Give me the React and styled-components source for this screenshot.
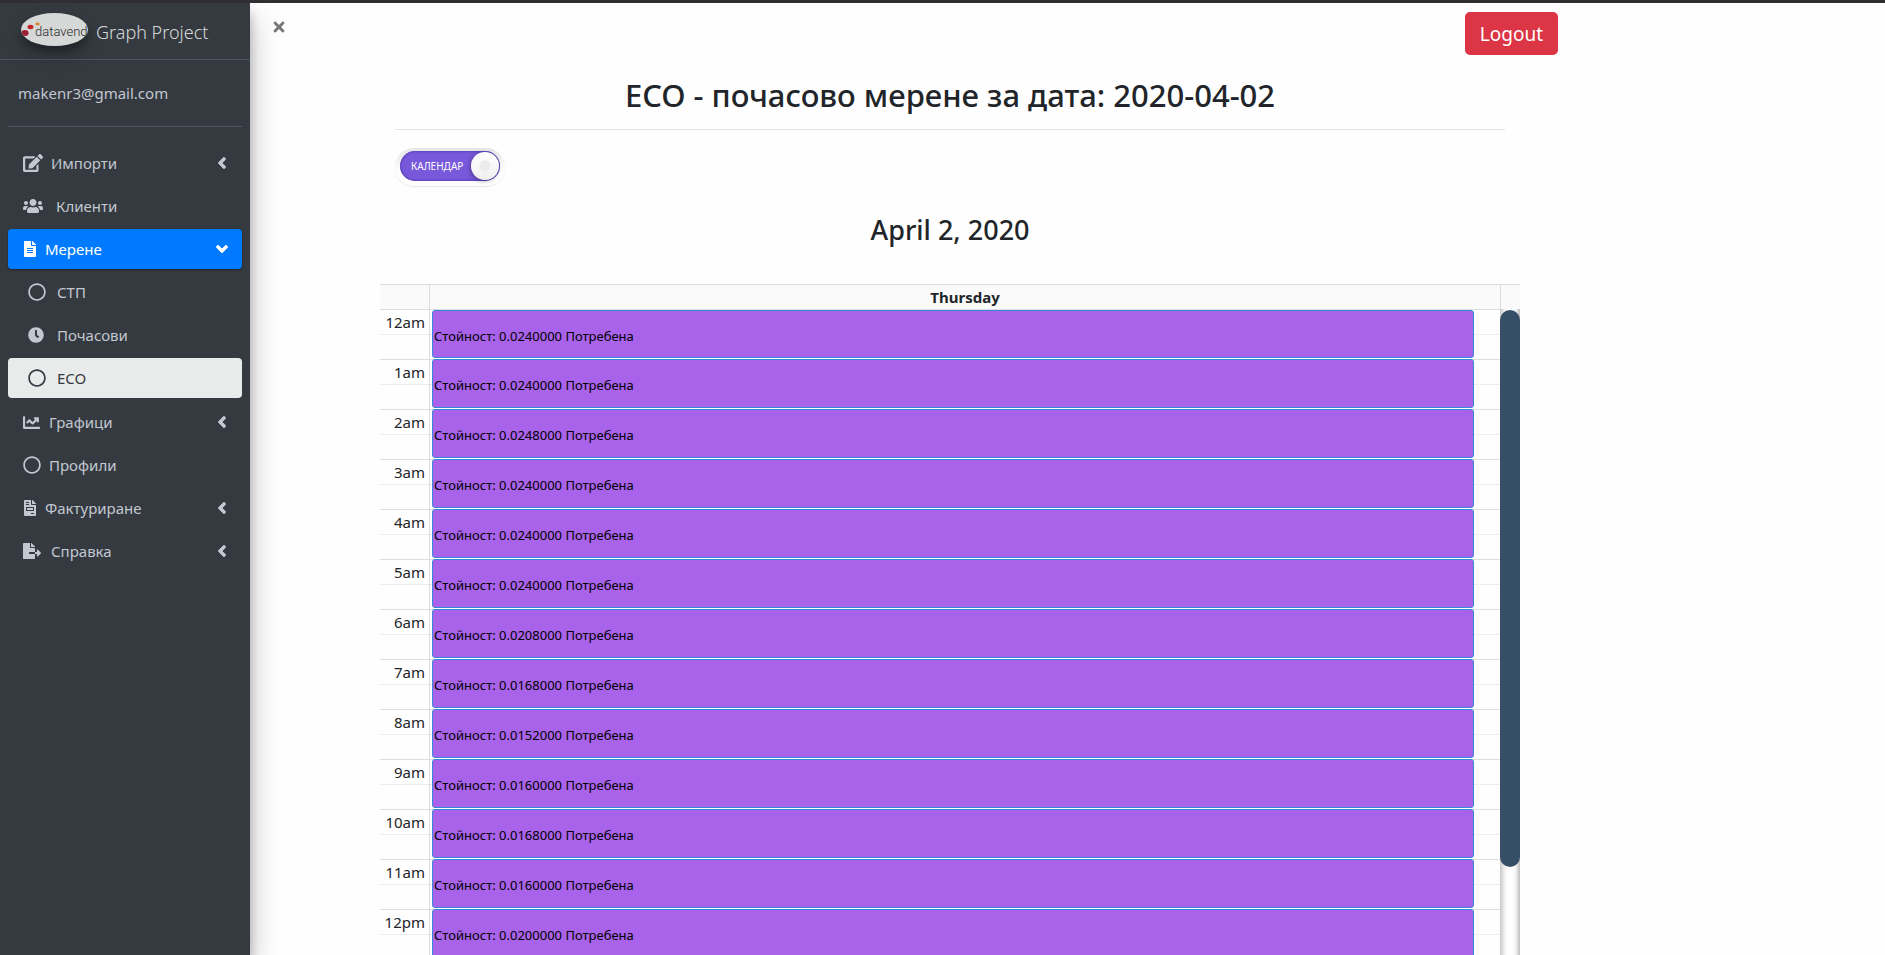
import React, { useState } from "react";
import styled, { createGlobalStyle, css } from "styled-components";
import {
  FaEdit,
  FaUsers,
  FaFileAlt,
  FaRegCircle,
  FaClock,
  FaChartLine,
  FaFileInvoice,
  FaFileExport,
  FaAngleLeft,
  FaAngleDown,
  FaTimes,
} from "react-icons/fa";

const GlobalStyle = createGlobalStyle`
  *, *::before, *::after { box-sizing: border-box; }
  body {
    margin: 0;
    background: #fefefe;
    color: #212529;
    font-family: "Noto Sans", "Open Sans", sans-serif;
    font-size: 15px;
    line-height: 24px;
  }
`;

const Page = styled.div`
  display: flex;
  height: 100vh;
  overflow: hidden;
  border-top: 3px solid #2e2e33;
`;

const Sidebar = styled.aside`
  flex: none;
  width: 250px;
  background: #343a40;
  color: #c2c7d0;
  box-shadow: 0 14px 28px rgba(0, 0, 0, 0.25), 0 10px 10px rgba(0, 0, 0, 0.22);
  z-index: 1;
`;

const Brand = styled.a`
  display: flex;
  align-items: center;
  gap: 8px;
  height: 57px;
  padding: 2px 21px 0;
  border-bottom: 1px solid #4b545c;
  color: rgba(255, 255, 255, 0.8);
  font-size: 18px;
  font-weight: 300;
  text-decoration: none;
  white-space: nowrap;
`;

const LogoMark = styled.svg`
  flex: none;
  width: 67px;
  height: 33px;
  margin-bottom: 5px;
  border-radius: 50%;
  box-shadow: 0 10px 20px rgba(0, 0, 0, 0.19), 0 6px 6px rgba(0, 0, 0, 0.23);
`;

const UserPanel = styled.div`
  display: flex;
  align-items: center;
  height: 67px;
  margin: 0 8px 16px;
  padding: 0 10px;
  border-bottom: 1px solid #4f5962;
`;

const UserLink = styled.a`
  color: #c2c7d0;
  text-decoration: none;
`;

const NavList = styled.ul`
  display: flex;
  flex-direction: column;
  gap: 3px;
  margin: 0;
  padding: ${(p) => (p.$nested ? "3px 0 1px" : "0 8px")};
  list-style: none;
`;

const NavLink = styled.a`
  display: flex;
  align-items: center;
  gap: ${(p) => p.$gap || 8}px;
  height: 40px;
  padding: 0 11px 0 ${(p) => (p.$nested ? 20 : 15)}px;
  border-radius: 4px;
  color: #c2c7d0;
  text-decoration: none;

  ${(p) =>
    p.$state === "open" &&
    css`
      background: #007bff;
      color: #fff;
      box-shadow: 0 1px 3px rgba(0, 0, 0, 0.12), 0 1px 2px rgba(0, 0, 0, 0.24);
    `}
  ${(p) =>
    p.$state === "current" &&
    css`
      background: #e9eaea;
      color: #343a40;
    `}
`;

const IconSlot = styled.span`
  display: flex;
  flex: none;
  width: ${(p) => p.$width}px;
`;

const Label = styled.span`
  flex: 1;
`;

const Main = styled.main`
  flex: 1;
  min-width: 0;
  overflow: hidden;
`;

const TopBar = styled.header`
  display: flex;
  justify-content: space-between;
  align-items: flex-start;
  width: 80%;
  padding: 9px 0 0 21px;
`;

const CloseButton = styled.button`
  display: flex;
  margin-top: 7px;
  padding: 0;
  border: 0;
  background: none;
  color: #777;
  cursor: pointer;
`;

const LogoutButton = styled.button`
  height: 43px;
  padding: 1px 15px 0;
  border: 0;
  border-radius: 5px;
  background: #dc3545;
  color: #fff;
  font: inherit;
  font-size: 19px;
  cursor: pointer;
`;

const Content = styled.div`
  max-width: 1140px;
  margin-left: 130px;
`;

const PageTitle = styled.h2`
  margin: 0 15px;
  padding: 19px 0 12px;
  border-bottom: 1px solid #e3e3e4;
  font-size: 31px;
  font-weight: 500;
  line-height: 43px;
  text-align: center;
`;

const SwitchLabel = styled.label`
  display: flex;
  width: 110px;
  margin: 18px 15px 0;
  padding: 3px 5px 5px;
  border-radius: 19px;
  background: linear-gradient(#e6e6e6, #fefefe 60%);
  box-shadow: 0 1px 1px #e6e6e6;
  cursor: pointer;
`;

const SwitchInput = styled.input`
  position: absolute;
  opacity: 0;
`;

const SwitchTrack = styled.span`
  display: flex;
  flex: 1;
  align-items: center;
  justify-content: space-between;
  flex-direction: ${(p) => (p.$on ? "row" : "row-reverse")};
  height: 30px;
  padding: 0 1px 0 11px;
  border-radius: 15px;
  background: #7859db;
  box-shadow: inset 0 0 3px #3d2696;
  color: #fff;
  font-size: 10px;
  line-height: 12px;
`;

const SwitchKnob = styled.span`
  width: 28px;
  height: 28px;
  border-radius: 50%;
  background: radial-gradient(circle, #ececec 0 5px, transparent 6px),
    linear-gradient(#fff, #f0f0f0);
  box-shadow: -1px 1px 4px rgba(0, 0, 0, 0.35);
`;

const DateTitle = styled.h2`
  margin: 26px 0 37px;
  font-size: 27px;
  font-weight: 500;
  line-height: 35px;
  text-align: center;
`;

const Timetable = styled.table`
  width: 100%;
  border-spacing: 0;
  table-layout: fixed;
`;

const TimeCol = styled.col`
  width: 49px;
`;

const ScrollCol = styled.col`
  width: 20px;
`;

const HeadCell = styled.th`
  height: 25px;
  padding: 0;
  border-top: 1px solid #ddd;
  border-left: ${(p) => (p.$divided ? "1px solid #ddd" : "0")};
  background: #fafafa;
  font-size: 15px;
  font-weight: 700;
  line-height: 24px;
`;

const slotLines = css`
  background-image: linear-gradient(#ddd, #ddd),
    linear-gradient(90deg, #ddd 50%, transparent 50%);
  background-position: 0 0, 0 25px;
  background-size: 100% 1px, 2px 1px;
  background-repeat: repeat-x;
`;

const HourCell = styled.th`
  ${slotLines}
  height: 50px;
  padding: 1px 4px 0 0;
  font-weight: 400;
  text-align: right;
  vertical-align: top;
`;

const SlotCell = styled.td`
  ${slotLines}
  height: 50px;
  padding: ${(p) => (p.$first ? 1 : 0)}px 26px 1px 2px;
  border-left: 1px solid #ddd;
  vertical-align: top;
`;

const EventLink = styled.a`
  display: block;
  height: ${(p) => (p.$first ? 48 : 49)}px;
  padding: 15px 1px 0;
  border: 1px solid #3788d8;
  border-radius: 3px;
  background: #a962ea;
  color: #000;
  font-size: 13px;
  line-height: 20px;
  text-decoration: none;
`;

const ScrollTrack = styled.td`
  padding: 1px 0 0;
  border-top: 0;
  background: linear-gradient(90deg, #c8c8c8, #f4f4f4 25%, #fefefe 40% 65%, #f0f0f0 80%, #bdbdbd);
  vertical-align: top;
`;

const ScrollThumb = styled.div`
  height: 557px;
  border-radius: 10px;
  background: #374e69;
`;

const MENU = [
  { label: "Импорти", icon: FaEdit, size: 20, width: 20, expandable: true },
  { label: "Клиенти", icon: FaUsers, size: 20, width: 20, gap: 13 },
  {
    label: "Мерене",
    icon: FaFileAlt,
    size: 16,
    width: 14,
    state: "open",
    expandable: true,
    children: [
      { label: "СТП", icon: FaRegCircle, size: 18, width: 18, gap: 11 },
      { label: "Почасови", icon: FaClock, size: 16, width: 18, gap: 11 },
      { label: "ECO", icon: FaRegCircle, size: 18, width: 18, gap: 11, state: "current" },
    ],
  },
  { label: "Графици", icon: FaChartLine, size: 17, width: 18, expandable: true },
  { label: "Профили", icon: FaRegCircle, size: 18, width: 18 },
  { label: "Фактуриране", icon: FaFileInvoice, size: 16, width: 14, expandable: true },
  { label: "Справка", icon: FaFileExport, size: 18, width: 20, expandable: true },
];

const HOURS = [
  ["12am", "0.0240000"],
  ["1am", "0.0240000"],
  ["2am", "0.0248000"],
  ["3am", "0.0240000"],
  ["4am", "0.0240000"],
  ["5am", "0.0240000"],
  ["6am", "0.0208000"],
  ["7am", "0.0168000"],
  ["8am", "0.0152000"],
  ["9am", "0.0160000"],
  ["10am", "0.0168000"],
  ["11am", "0.0160000"],
  ["12pm", "0.0200000"],
];

function Logo() {
  return (
    <LogoMark viewBox="0 0 67 33" aria-hidden="true">
      <rect width="67" height="33" fill="#d6d8d7" />
      <ellipse cx="4" cy="20" rx="3.6" ry="3" fill="#9b2335" />
      <ellipse cx="9.5" cy="14" rx="3" ry="2.2" fill="#c8242b" />
      <ellipse cx="16.5" cy="11" rx="2.2" ry="1.4" fill="#d5832f" />
      <text x="14" y="23" fontFamily="Roboto, sans-serif" fontSize="13" fill="#26282a">
        datavend
      </text>
    </LogoMark>
  );
}

function NavItem({ item, nested }) {
  const Icon = item.icon;
  return (
    <li>
      <NavLink href="#" $gap={item.gap} $nested={nested} $state={item.state}>
        <IconSlot $width={item.width}>
          <Icon size={item.size} />
        </IconSlot>
        <Label>{item.label}</Label>
        {item.expandable &&
          (item.state === "open" ? (
            <FaAngleDown size={18} stroke="currentColor" strokeWidth="24" />
          ) : (
            <FaAngleLeft size={18} stroke="currentColor" strokeWidth="24" />
          ))}
      </NavLink>
      {item.children && (
        <NavList $nested>
          {item.children.map((child) => (
            <NavItem key={child.label} item={child} nested />
          ))}
        </NavList>
      )}
    </li>
  );
}

export default function App() {
  const [calendarOn, setCalendarOn] = useState(true);
  return (
    <>
      <GlobalStyle />
      <Page>
        <Sidebar>
          <Brand href="#">
            <Logo />
            Graph Project
          </Brand>
          <UserPanel>
            <UserLink href="#">makenr3@gmail.com</UserLink>
          </UserPanel>
          <nav>
            <NavList>
              {MENU.map((item) => (
                <NavItem key={item.label} item={item} />
              ))}
            </NavList>
          </nav>
        </Sidebar>
        <Main>
          <TopBar>
            <CloseButton type="button" aria-label="Close menu">
              <FaTimes size={16} />
            </CloseButton>
            <LogoutButton type="button">Logout</LogoutButton>
          </TopBar>
          <Content>
            <PageTitle>ECO - почасово мерене за дата: 2020-04-02</PageTitle>
            <SwitchLabel>
              <SwitchInput
                type="checkbox"
                checked={calendarOn}
                onChange={(e) => setCalendarOn(e.target.checked)}
              />
              <SwitchTrack $on={calendarOn}>
                КАЛЕНДАР
                <SwitchKnob />
              </SwitchTrack>
            </SwitchLabel>
            <DateTitle>April 2, 2020</DateTitle>
            <Timetable>
              <colgroup>
                <TimeCol />
                <col />
                <ScrollCol />
              </colgroup>
              <thead>
                <tr>
                  <HeadCell />
                  <HeadCell $divided>Thursday</HeadCell>
                  <HeadCell $divided />
                </tr>
              </thead>
              <tbody>
                {HOURS.map(([hour, value], i) => (
                  <tr key={hour}>
                    <HourCell scope="row">{hour}</HourCell>
                    <SlotCell $first={i === 0}>
                      <EventLink href="#" $first={i === 0}>
                        Стойност: {value} Потребена
                      </EventLink>
                    </SlotCell>
                    {i === 0 && (
                      <ScrollTrack rowSpan={HOURS.length}>
                        <ScrollThumb />
                      </ScrollTrack>
                    )}
                  </tr>
                ))}
              </tbody>
            </Timetable>
          </Content>
        </Main>
      </Page>
    </>
  );
}
